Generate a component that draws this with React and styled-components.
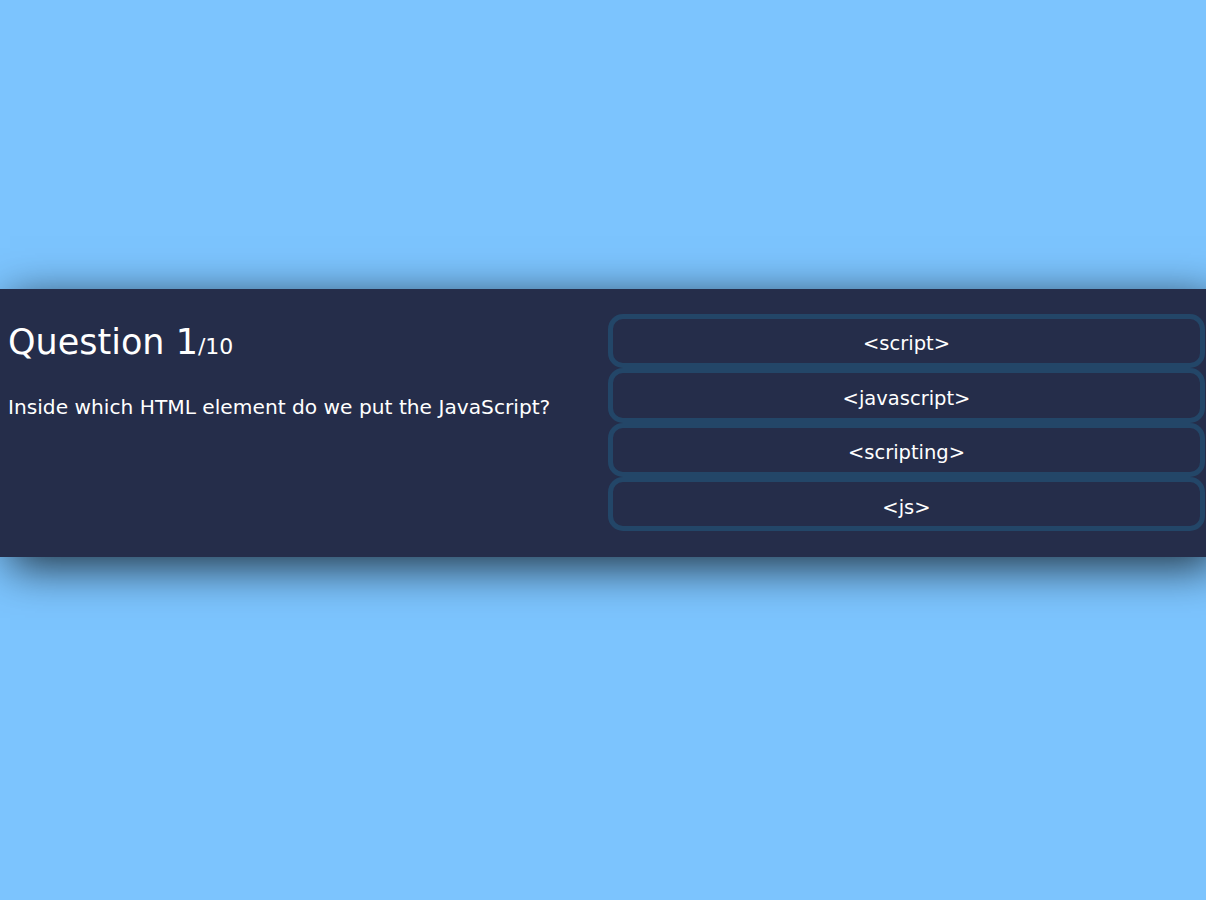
import React from "react";
import styled, { createGlobalStyle } from "styled-components";

const Global = createGlobalStyle`
  html, body { margin: 0; padding: 0; }
  body {
    background-color: #7cc4fe;
    font-family: "DejaVu Sans", Verdana, sans-serif;
    color: #ffffff;
    min-height: 900px;
  }
`;

const Page = styled.div`
  min-height: 900px;
  display: flex;
  flex-direction: column;
  justify-content: center;
  padding-bottom: 54px;
  box-sizing: border-box;
`;

const Card = styled.main`
  background-color: #252d4a;
  box-shadow: 10px 10px 42px 0 rgba(0, 0, 0, 0.75);
  display: grid;
  grid-template-columns: 600px 1fr;
  padding: 25px 1px 26px 8px;
  box-sizing: border-box;
  width: 100%;
`;

const QuestionSection = styled.section`
  display: flex;
  flex-direction: column;
`;

const QuestionCount = styled.div`
  font-size: 35px;
  margin-top: 8px;
  margin-bottom: 28px;
  line-height: 40px;
`;

const Total = styled.span`
  font-size: 22px;
`;

const QuestionText = styled.div`
  font-size: 20.2px;
  line-height: 24px;
`;

const Answers = styled.section`
  display: flex;
  flex-direction: column;
`;

const AnswerButton = styled.button`
  height: 54.35px;
  box-sizing: border-box;
  width: 100%;
  font-family: inherit;
  font-size: 19.5px;
  color: #ffffff;
  background-color: #252d4a;
  border: 5px solid #234668;
  border-radius: 15px;
  display: flex;
  justify-content: center;
  align-items: center;
  padding: 8px 5px 2px;
  cursor: pointer;
`;

const answers = ["<script>", "<javascript>", "<scripting>", "<js>"];

export default function App() {
  return (
    <Page>
      <Global />
      <Card>
        <QuestionSection>
          <QuestionCount>
            Question 1<Total>/10</Total>
          </QuestionCount>
          <QuestionText>Inside which HTML element do we put the JavaScript?</QuestionText>
        </QuestionSection>
        <Answers>
          {answers.map((a) => (
            <AnswerButton key={a}>{a}</AnswerButton>
          ))}
        </Answers>
      </Card>
    </Page>
  );
}
